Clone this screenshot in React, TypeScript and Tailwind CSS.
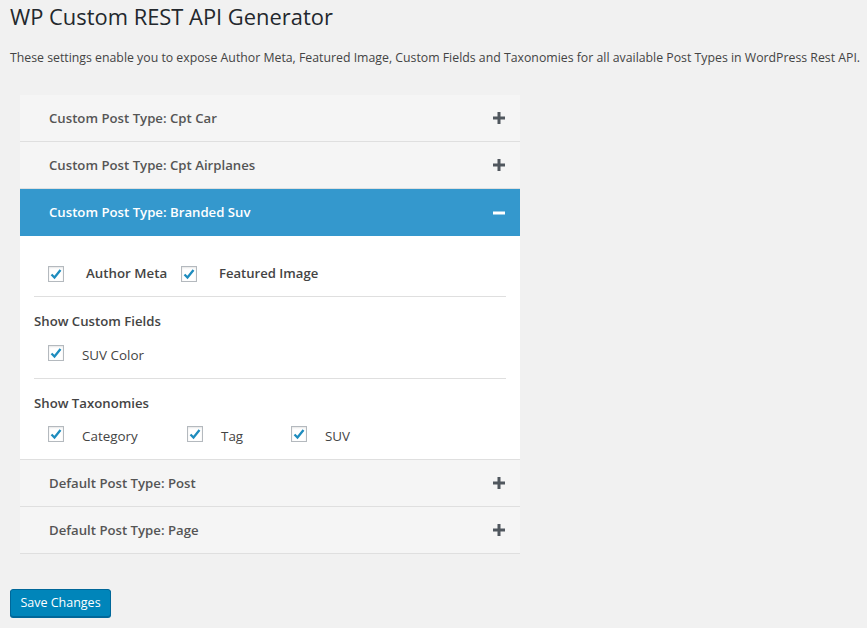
const FONT = "font-['Open_Sans','Noto_Sans',sans-serif]";

function PlusIcon() {
  return (
    <svg width="14" height="14" viewBox="0 0 14 14" className="flex-none">
      <path d="M5.500 1h3v4.500H13v3H8.500V13h-3V8.500H1v-3h4.500z" fill="#50575e" />
    </svg>
  );
}

function MinusIcon() {
  return (
    <svg width="14" height="14" viewBox="0 0 14 14" className="flex-none">
      <rect x="1" y="5.500" width="12" height="3" fill="#ffffff" />
    </svg>
  );
}

function Check() {
  return (
    <span className="flex h-4 w-4 flex-none items-center justify-center border border-[#b4b9be] bg-white shadow-[inset_0_1px_2px_rgba(0,0,0,0.1)]">
      <svg width="14" height="14" viewBox="0 0 14 14">
        <path d="M2.500 7.500 L5.500 10.500 L11.500 3" fill="none" stroke="#1e8cbe" strokeWidth="2.300" />
      </svg>
    </span>
  );
}

function Header({ title, open = false }: { title: string; open?: boolean }) {
  return (
    <div
      className={
        open
          ? 'flex h-[47px] items-center justify-between bg-[#3498cd] pl-[29px] pr-[14px] text-[13.200px] font-semibold text-white'
          : 'flex h-[47px] items-center justify-between border-b border-[#dfdfdf] bg-[#f5f5f5] pl-[29px] pr-[14px] text-[13.200px] font-semibold text-[#555555]'
      }
    >
      <span className="pt-[1px]">{title}</span>
      {open ? <MinusIcon /> : <PlusIcon />}
    </div>
  );
}

function Option({ label, width }: { label: string; width: string }) {
  return (
    <div className={`flex items-start ${width}`}>
      <Check />
      <span className="ml-[18px] text-[13.400px] leading-[20px] text-[#444444]">{label}</span>
    </div>
  );
}

export default function App() {
  return (
    <div className={`${FONT} min-h-[628px] bg-[#f1f1f1] pl-[10px] text-[13px] text-[#444444]`}>
      <h1 className="pt-[2px] text-[21.900px] leading-[29px] font-normal text-[#23282d]">
        WP Custom REST API Generator
      </h1>
      <p className="mt-[17px] text-[12.300px] leading-[20px] whitespace-nowrap">
        These settings enable you to expose Author Meta, Featured Image, Custom Fields and Taxonomies for all available Post Types in WordPress Rest API.
      </p>

      <div className="mt-[27px] ml-[10px] w-[500px]">
        <Header title="Custom Post Type: Cpt Car" />
        <Header title="Custom Post Type: Cpt Airplanes" />
        <Header title="Custom Post Type: Branded Suv" open />

        <div className="border-b border-[#dfdfdf] bg-white px-[14px]">
          <div className="flex h-[61px] items-center border-b border-[#dfdfdf] pl-[14px] pt-[16px]">
            <div className="flex w-[133px] items-center">
              <Check />
              <span className="ml-[22px] text-[13.300px] font-semibold">Author Meta</span>
            </div>
            <div className="flex items-center">
              <Check />
              <span className="ml-[22px] text-[13.100px] font-semibold">Featured Image</span>
            </div>
          </div>

          <div className="h-[82px] border-b border-[#dfdfdf]">
            <div className="pt-[14px] text-[13.200px] leading-[20px] font-semibold">Show Custom Fields</div>
            <div className="mt-[14px] flex pl-[14px]">
              <Option label="SUV Color" width="w-[140px]" />
            </div>
          </div>

          <div className="h-[80px]">
            <div className="pt-[14px] text-[13.200px] leading-[20px] font-semibold">Show Taxonomies</div>
            <div className="mt-[13px] flex pl-[14px]">
              <Option label="Category" width="w-[139px]" />
              <Option label="Tag" width="w-[104px]" />
              <Option label="SUV" width="w-[80px]" />
            </div>
          </div>
        </div>

        <Header title="Default Post Type: Post" />
        <Header title="Default Post Type: Page" />
      </div>

      <button className="mt-[35px] h-[28px] w-[101px] rounded-[3px] border border-[#006799] bg-[#0085ba] pt-[1px] text-[12.500px] text-white shadow-[0_1px_0_#006799]">
        Save Changes
      </button>
    </div>
  );
}
